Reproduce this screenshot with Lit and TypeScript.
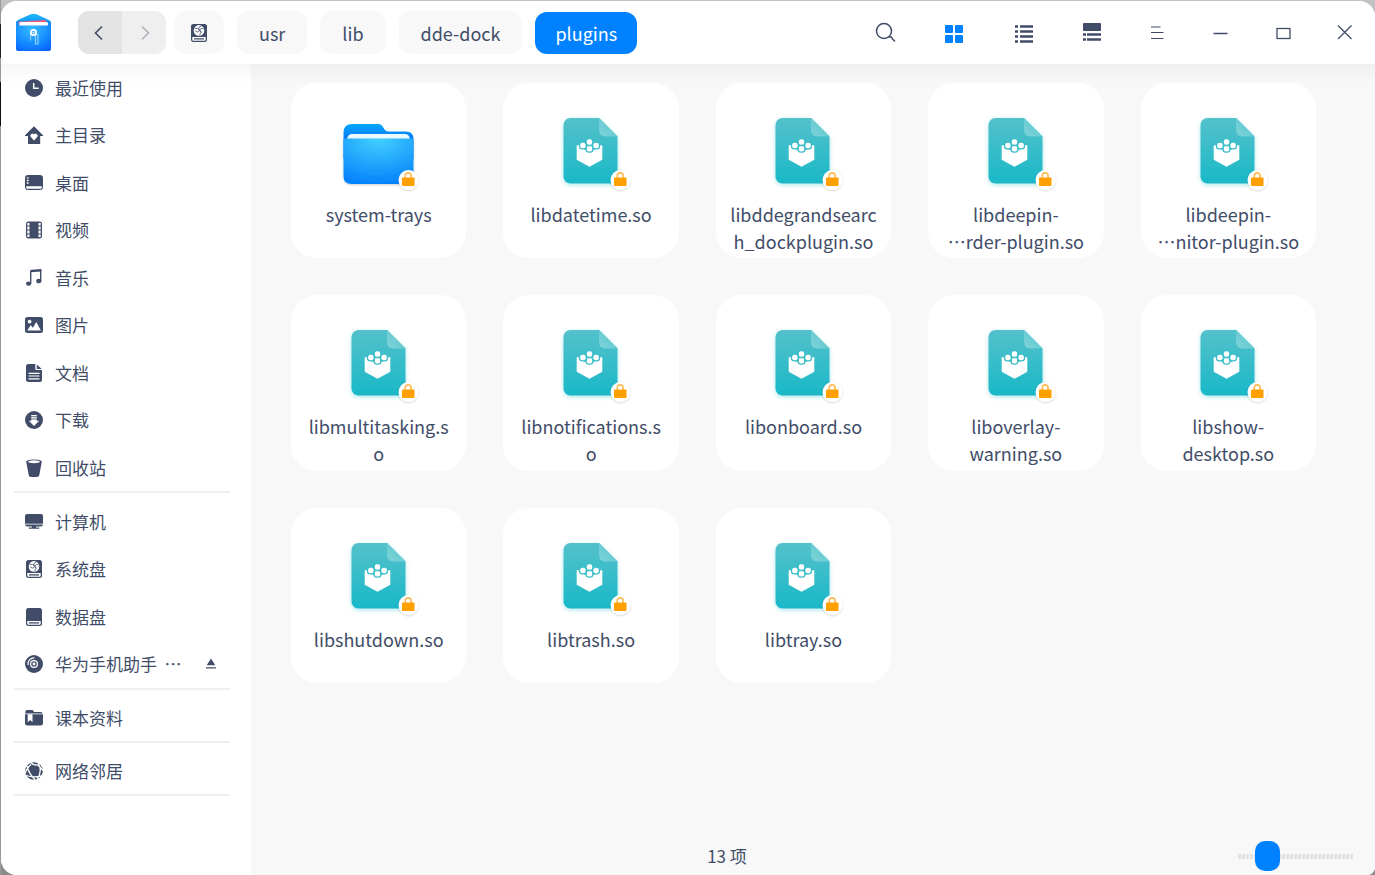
import { LitElement, html, svg, css, nothing } from 'lit';
import { customElement, property, state } from 'lit/decorators.js';

const glyphs: Record<string, unknown> = {
  recent: svg`<circle cx="9" cy="9" r="9" fill="currentColor"/><path d="M8.7 4v5.3h5" fill="none" stroke="#fff" stroke-width="1.5"/>`,
  home: svg`<path fill="currentColor" d="M9 .3 18 9.2v.8h-2.8v8H3v-8H0v-.8z"/><path fill="#fff" d="M9 14.4 5.8 11a2 2 0 0 1 3.2-2.5A2 2 0 0 1 12.2 11z"/>`,
  desktop: svg`<rect x=".5" y="1.5" width="17" height="14" rx="2" fill="currentColor" stroke="currentColor"/><path fill="#fff" d="M1.2 12.200h15.600v1.600q0 1-1 1H2.200q-1 0-1-1zM1.800 3.200h1.800v1.400H1.800zM1.800 5.700h1.800v1.500H1.800zM1.800 8.300h1.800v1.500H1.800z"/>`,
  video: svg`<rect x="1" y=".5" width="16" height="17" rx="2.5" fill="currentColor"/><path fill="#fff" d="M2.300 2h2.200v2.500H2.300zM2.300 5.600h2.200v2.900H2.300zM2.300 9.600h2.200v2.900H2.300zM2.300 13.600h2.200V16H2.300zM13.500 2h2.200v2.500h-2.200zM13.500 5.600h2.200v2.900h-2.200zM13.500 9.600h2.200v2.900h-2.200zM13.500 13.600h2.200V16h-2.200z"/>`,
  music: svg`<path d="M5.700 14.500V2.600q0-.9 1-1.100l9-.8v11.600" fill="none" stroke="currentColor" stroke-width="1.400"/><path d="M5.500 1.500 16.300.800v1.600L5.500 3.200z" fill="currentColor"/><ellipse cx="3.600" cy="14.600" rx="2.600" ry="2.200" fill="currentColor"/><ellipse cx="13.800" cy="12" rx="2.600" ry="2.300" fill="currentColor"/>`,
  picture: svg`<rect y="1" width="18" height="16" rx="2.500" fill="currentColor"/><circle cx="4.600" cy="5.600" r="1.900" fill="#fff"/><path fill="#fff" d="m2.200 14.600 3.500-5.400 2.200 2.600L11.300 6l4.600 8.600z"/>`,
  document: svg`<path fill="currentColor" d="M3.500 0h6.800v4.800q0 1.300 1.300 1.300H17v9.400q0 2.500-2.500 2.500h-11Q1 18 1 15.500V2.500Q1 0 3.500 0zM11.800.400 16.800 5h-5z"/><path stroke="#fff" stroke-width="1.200" d="M3.500 9.300h11M3.500 12h11M3.500 14.800h11"/>`,
  download: svg`<circle cx="9" cy="9" r="9" fill="currentColor"/><path fill="#fff" d="M6.200 4h5.600v5.700h2.400L9 15 3.800 9.700h2.400z"/><path stroke="currentColor" stroke-width=".8" d="M6 5.700h6M6 8h6"/>`,
  trash: svg`<path fill="currentColor" d="M1.200 2.800C1.200-.2 16.800-.2 16.800 2.800L14.300 16q-.3 2-2.300 2H6q-2 0-2.300-2z"/><ellipse cx="9" cy="2.800" rx="6" ry="1.500" fill="#fff"/>`,
  computer: svg`<path fill="currentColor" d="M2 1h14q2 0 2 2v7.800H0V3q0-2 2-2zM0 11.600h18q0 1.800-2 1.800h-5v1.200h3.200v1.200H3.800v-1.200H7v-1.200H2q-2 0-2-1.800z"/>`,
  system: svg`<rect x="1" width="16" height="18" rx="2.500" fill="currentColor"/><path fill="#fff" d="M2.300 13h13.400v2.700q0 1-1 1H3.300q-1 0-1-1z"/><path stroke="currentColor" stroke-width="1.300" d="M4 14.900h10"/><circle cx="9" cy="6.400" r="5.300" fill="#fff"/><g fill="none" stroke="currentColor" stroke-width=".8"><path d="M4.600 4.500q3.200-.8 4.400.6t-.2 2.600-3.600-.9"/><path d="M11.500 1.800Q8.300 3 8.700 4.900t1.700 2.300-.8 3.900"/><path d="M13.600 5q-2-1.200-3.300.2t1.500 3.300"/></g>`,
  data: svg`<rect x="1" width="16" height="18" rx="2.500" fill="currentColor"/><path fill="#fff" d="M2.300 13h13.400v2.700q0 1-1 1H3.300q-1 0-1-1z"/><path stroke="currentColor" stroke-width="1.300" d="M4 14.900h10"/>`,
  disc: svg`<circle cx="9" cy="9" r="9" fill="currentColor"/><g fill="none" stroke="#fff"><circle cx="9" cy="9" r="3.400" stroke-width="1.200"/><path stroke-width="1.200" d="M3 10A6 6 0 0 1 9.500 3"/></g><circle cx="9" cy="9" r="1.400" fill="#fff"/>`,
  bookmark: svg`<path fill="currentColor" d="M1.800 1h5.300q1 0 1.400 1l.4 1H16q1.500 0 1.700 1.500H.300Q.200 1 1.800 1zM0 5.300h18V14q0 2.500-2.500 2.500h-13Q0 16.500 0 14z"/><path fill="#fff" d="M2.700 5.300h4.800v8l-2.400-2.200-2.400 2.200z"/>`,
  network: svg`<circle cx="9" cy="9" r="8.800" fill="currentColor"/><g fill="none" stroke="#fff" stroke-width="1.300"><path d="M5.500.300Q8 3.500 13.500 3M13 1Q18 8.500 12 17.800M2 4Q3.500 11 10 17.800M6 2.500Q2.500 5 .300 11M1.500 13.500q6 2.500 15.500.5M13.500 3.500l4.500 5"/></g>`,
  eject: svg`<path fill="currentColor" d="m9 3.500 4.300 6.700H4.700zM4 12.200h10v1.300H4z"/>`,
  search: svg`<g fill="none" stroke="currentColor" stroke-width="1.500"><circle cx="8" cy="8" r="7.500"/><path d="m12.500 14 3 0 1 2 2.500 2.500"/></g>`,
  grid: svg`<g fill="currentColor"><rect x="0" y="2" width="8" height="8" rx="1"/><rect x="10" y="2" width="8" height="8" rx="1"/><rect x="0" y="12" width="8" height="8" rx="1"/><rect x="10" y="12" width="8" height="8" rx="1"/></g>`,
  list: svg`<path stroke="currentColor" stroke-width="2.600" d="M1 3.500h3M6 3.500h13M1 8.500h3M6 8.500h13M1 13.500h3M6 13.500h13M1 18.500h3M6 18.500h13"/>`,
  detail: svg`<rect x="0" y="0" width="18" height="8" rx="1" fill="currentColor"/><path stroke="currentColor" stroke-width="2.600" d="M0 11.500h3M4 11.500h14M0 16.500h3M4 16.500h14"/>`,
  menu: svg`<path stroke="currentColor" stroke-width="1.200" d="M3 4h9.500M3 9.500h12.500M3 15.500h12.500"/>`,
  minimize: svg`<path stroke="currentColor" stroke-width="1.300" d="M3.500 10.500h14"/>`,
  maximize: svg`<rect x="5" y="5.500" width="13" height="10" fill="none" stroke="currentColor" stroke-width="1.300"/>`,
  close: svg`<path stroke="currentColor" stroke-width="1.300" d="m4 2.500 13.500 13.500M17.500 2.500 4 16"/>`,
  back: svg`<path fill="none" stroke="currentColor" stroke-width="1.600" d="M12 3.500 5.500 10l6.500 6.500"/>`,
  forward: svg`<path fill="none" stroke="currentColor" stroke-width="1.400" d="m8 3.500 6.500 6.500L8 16.500"/>`,
};

@customElement('ui-icon')
class UiIcon extends LitElement {
  @property() name = '';
  @property({ type: Number }) size = 18;
  static styles = css`
    :host { display: inline-flex; flex: none; }
    svg { display: block; overflow: visible; }
  `;
  render() {
    return html`<svg width=${this.size} height=${this.size} viewBox="0 0 ${this.size} ${this.size}" aria-hidden="true">${glyphs[this.name]}</svg>`;
  }
}

@customElement('file-card')
class FileCard extends LitElement {
  @property({ attribute: false }) lines: string[] = [];
  @property() kind = 'library';
  static styles = css`
    :host { display: block; }
    .card {
      box-sizing: border-box; width: 100%; aspect-ratio: 1; padding: 22px 0 0; border: 0;
      border-radius: 26px; background: #fff; color: #414d68; font: inherit; line-height: 27px;
      display: flex; flex-direction: column; align-items: center; gap: 6px;
    }
    .picture { display: block; flex: none; }
    .name { white-space: nowrap; }
  `;
  private library() {
    return svg`
      <defs>
        <linearGradient id="body" x1="0" y1="0" x2="0" y2="1"><stop stop-color="#54c1cb"/><stop offset="1" stop-color="#19b8c8"/></linearGradient>
        <linearGradient id="fold" x1="0" y1="1" x2="1" y2="0"><stop stop-color="#80d4da"/><stop offset="1" stop-color="#55c2cb"/></linearGradient>
        <filter id="soft" x="-20%" y="-20%" width="140%" height="140%"><feDropShadow dx="0" dy="1.500" stdDeviation="2" flood-color="#19b8c8" flood-opacity=".35"/></filter>
      </defs>
      <path filter="url(#soft)" fill="url(#body)" d="M24.500 13H53L71.500 31.500V71.500a7 7 0 0 1-7 7h-40a7 7 0 0 1-7-7V20a7 7 0 0 1 7-7z"/>
      <path fill="url(#fold)" d="M53 13v11.500q0 7 7 7h11.500z"/>
      <path fill="#fff" d="M30.700 40.200H56.300v14.600L43.500 61.700 30.700 54.800z"/>
      <path fill="#3cbec9" d="M33 39h21v3.500l-6.500 2.500h-8L33 42.500z"/>
      <g fill="#fff" stroke="#3cbec9" stroke-width="1.300">
        <rect x="40.100" y="40.300" width="6.800" height="6.800" rx="2.900"/><rect x="33.500" y="37.100" width="6.800" height="6.800" rx="2.900"/>
        <rect x="46.700" y="37.100" width="6.800" height="6.800" rx="2.900"/><rect x="40.100" y="33.700" width="6.800" height="6.800" rx="2.900"/>
      </g>`;
  }
  private folder() {
    return svg`
      <defs>
        <linearGradient id="tab" x1="0" y1="0" x2="0" y2="1"><stop stop-color="#05a7ff"/><stop offset=".5" stop-color="#0872ef"/></linearGradient>
        <radialGradient id="front" cx=".5" cy="0" r="1"><stop stop-color="#43d0ff"/><stop offset=".5" stop-color="#24aafc"/><stop offset="1" stop-color="#0583fb"/></radialGradient>
        <filter id="soft" x="-20%" y="-20%" width="140%" height="140%"><feDropShadow dx="0" dy="1" stdDeviation="1" flood-opacity=".2"/></filter>
      </defs>
      <path fill="url(#tab)" d="M18 19h26q3.500 0 5 3l1.500 2.500q1.500 2 4 2H72q7.500 0 7.500 7.500v20h-70V27.500Q9.500 19 18 19z"/>
      <path fill="#eafaff" d="M13 34q1-5 5-5h53q4 0 5 5z"/>
      <path filter="url(#soft)" fill="url(#front)" d="M9.500 33.500h70V71q0 8-8 8h-54q-8 0-8-8z"/>`;
  }
  render() {
    return html`<button class="card">
      <svg class="picture" width="90" height="90" viewBox="0 0 90 90" aria-hidden="true">
        ${this.kind === 'folder' ? this.folder() : this.library()}
        <defs><filter id="badge" x="-30%" y="-30%" width="160%" height="160%"><feDropShadow dx="0" dy=".800" stdDeviation=".8" flood-opacity=".2"/></filter></defs>
        <circle cx="74.500" cy="75" r="10" fill="#fff" filter="url(#badge)"/>
        <path d="M71.300 73v-2.300a2.900 2.900 0 0 1 5.800 0V73" fill="none" stroke="#ffbd59" stroke-width="1.700"/>
        <rect x="68" y="72.500" width="12.500" height="8.500" rx=".800" fill="#ffa000"/>
      </svg>
      <span class="name">${this.lines.map((l, i) => html`${i ? html`<br>` : nothing}${l}`)}</span>
    </button>`;
  }
}

const places: [string, string][][] = [
  [['recent', '最近使用'], ['home', '主目录'], ['desktop', '桌面'], ['video', '视频'], ['music', '音乐'], ['picture', '图片'], ['document', '文档'], ['download', '下载'], ['trash', '回收站']],
  [['computer', '计算机'], ['system', '系统盘'], ['data', '数据盘'], ['disc', '华为手机助手\u00a0 …']],
  [['bookmark', '课本资料']],
  [['network', '网络邻居']],
];

const files: string[][] = [
  ['system-trays'], ['libdatetime.so'], ['libddegrandsearc', 'h_dockplugin.so'], ['libdeepin-', '…rder-plugin.so'], ['libdeepin-', '…nitor-plugin.so'],
  ['libmultitasking.s', 'o'], ['libnotifications.s', 'o'], ['libonboard.so'], ['liboverlay-', 'warning.so'], ['libshow-', 'desktop.so'],
  ['libshutdown.so'], ['libtrash.so'], ['libtray.so'],
];

@customElement('app-root')
class AppRoot extends LitElement {
  @state() private view = 'grid';

  static styles = css`
    :host {
      display: flex; box-sizing: border-box; min-height: 100vh; padding: 1px 0 0 1px;
      background: linear-gradient(#999 24px, #222 24px 58px, #999 58px 82px, #111 82px 126px, #999 126px) 0 0 / 1px 100% no-repeat, linear-gradient(#c2c2c2 50%, #8c8c8c 50%);
      font-family: "Noto Sans CJK SC", "Noto Sans", sans-serif; font-size: 18px; line-height: 26px; color: #414d68;
    }
    button { font: inherit; color: inherit; border: 0; padding: 0; background: none; }
    ul { list-style: none; margin: 0; padding: 0; }
    .window { flex: 1; display: flex; flex-direction: column; overflow: hidden; border-radius: 16px 16px 8px 16px; background: #fff; }
    .titlebar { position: relative; display: flex; align-items: center; height: 63px; background: #fff; }
    .titlebar::after {
      content: ""; position: absolute; left: 0; right: 0; top: 100%; height: 20px; pointer-events: none;
      background: linear-gradient(rgba(0, 0, 0, .035), rgba(0, 0, 0, 0));
    }
    .logo { display: block; flex: none; margin: 0 26px 0 14px; }
    .history { display: flex; border-radius: 11px; overflow: hidden; background: #efefef; }
    .history button { display: flex; align-items: center; justify-content: center; width: 44px; height: 43px; }
    .history .back { background: #e3e3e3; }
    .history .forward { color: #a9afbc; }
    .crumbs { display: flex; align-items: center; gap: 13px; margin-left: 8px; }
    .crumb { display: flex; align-items: center; height: 43px; padding: 0 22px; border-radius: 12px; background: #f8f8f8; }
    .crumb.disk { padding: 0 16px; }
    .crumb.current { padding: 0 20px; height: 42px; background: #0081ff; color: #fff; }
    .spacer { flex: 1; }
    .tool { display: flex; align-items: center; justify-content: center; width: 69px; height: 63px; }
    .tool.active { color: #0081ff; }
    .tool.control { width: 62px; }
    .main { flex: 1; display: flex; }
    .sidebar { width: 250px; flex: none; background: #fff; }
    .place { display: flex; align-items: center; height: 47px; padding: 0 31px 0 24px; font-size: 17px; }
    .place:nth-child(even) { height: 48px; }
    .place a { flex: 1; display: flex; align-items: center; gap: 12px; color: inherit; text-decoration: none; }
    .place button { display: flex; }
    .group::after { content: ""; display: block; height: 2px; margin: 0 21px 5px 13px; background: #efefef; }
    .group + .group::after { margin-bottom: 4px; }
    .content { flex: 1; display: flex; flex-direction: column; background: #f8f8f8; }
    .files { display: grid; grid-template-columns: repeat(auto-fill, minmax(175px, 1fr)); gap: 37px; padding: 19px 59px 20px 40px; }
    .status { display: flex; align-items: center; height: 38px; margin-top: auto; font-size: 17px; }
    .count { flex: 1; text-align: center; }
    .zoom { padding: 0 22px 0 35px; display: flex; }
    .zoom input {
      appearance: none; width: 115px; height: 30px; margin: 0;
      background: repeating-linear-gradient(90deg, #e2e2e2 0 3px, transparent 3px 4px) center / 100% 5px no-repeat;
    }
    .zoom input::-webkit-slider-thumb { appearance: none; width: 25px; height: 30px; border-radius: 10px; background: #0081ff; }
  `;

  private logo() {
    return html`<svg class="logo" width="37" height="42" viewBox="0 0 37 42" aria-hidden="true">
      <defs>
        <radialGradient id="pocket" cx=".45" cy=".25" r=".9"><stop stop-color="#37bcff"/><stop offset=".55" stop-color="#158dff"/><stop offset="1" stop-color="#075cff"/></radialGradient>
        <linearGradient id="flap" x1="0" y1="0" x2="0" y2="1"><stop stop-color="#20baff"/><stop offset="1" stop-color="#0876e8"/></linearGradient>
      </defs>
      <path fill="url(#flap)" d="M1 10.500Q1 9 3 8L15 2.500q3.500-1.500 7 0L34 8q2 1 2 2.500V18H1z"/>
      <path fill="#f2587c" d="M3.500 9.800 30 8l2.500 3v3h-29z"/>
      <rect x="4.500" y="10" width="28.500" height="6" rx="1.500" fill="#fff"/>
      <path fill="url(#pocket)" d="M1 9.500q2.500 1 3.500 4H32.500q1-3 3.500-4v27.500q0 2-2 2H3q-2 0-2-2z"/>
      <path fill="none" stroke="#8fceff" stroke-width="1.200" d="M15.500 22.500v6M20.500 22.500H23v9.500h-2.500z"/>
      <circle cx="18.500" cy="20.500" r="2.600" fill="#1d9cff" stroke="#fff" stroke-width="1.800"/>
      <circle cx="18.500" cy="20.500" r=".9" fill="#fff"/>
    </svg>`;
  }

  render() {
    const views: [string, string][] = [['grid', '图标视图'], ['list', '列表视图'], ['detail', '详情视图']];
    const controls: [string, string][] = [['menu', '菜单'], ['minimize', '最小化'], ['maximize', '最大化'], ['close', '关闭']];
    return html`<div class="window" lang="zh-CN">
      <header class="titlebar">
        ${this.logo()}
        <div class="history">
          <button class="back" aria-label="后退"><ui-icon name="back" size="20"></ui-icon></button>
          <button class="forward" aria-label="前进"><ui-icon name="forward" size="20"></ui-icon></button>
        </div>
        <nav class="crumbs">
          <button class="crumb disk" aria-label="系统盘"><ui-icon name="system" size="18"></ui-icon></button>
          ${['usr', 'lib', 'dde-dock'].map((c) => html`<button class="crumb">${c}</button>`)}
          <button class="crumb current">plugins</button>
        </nav>
        <div class="spacer"></div>
        <button class="tool" aria-label="搜索"><ui-icon name="search" size="20"></ui-icon></button>
        ${views.map(([n, l]) => html`<button class="tool ${this.view === n ? 'active' : ''}" aria-label=${l} @click=${() => (this.view = n)}><ui-icon name=${n} size="20"></ui-icon></button>`)}
        ${controls.map(([n, l]) => html`<button class="tool control" aria-label=${l}><ui-icon name=${n} size="20"></ui-icon></button>`)}
      </header>
      <div class="main">
        <nav class="sidebar">
          ${places.map((g) => html`<ul class="group">${g.map(([icon, label]) => html`<li class="place">
            <a href="#"><ui-icon name=${icon}></ui-icon>${label}</a>
            ${icon === 'disc' ? html`<button aria-label="弹出"><ui-icon name="eject"></ui-icon></button>` : nothing}
          </li>`)}</ul>`)}
        </nav>
        <main class="content">
          <div class="files">
            ${files.map((lines, i) => html`<file-card .lines=${lines} kind=${i === 0 ? 'folder' : 'library'}></file-card>`)}
          </div>
          <footer class="status">
            <span class="count">13 项</span>
            <label class="zoom"><input type="range" min="0" max="100" .value=${'19'} aria-label="图标大小"></label>
          </footer>
        </main>
      </div>
    </div>`;
  }
}
